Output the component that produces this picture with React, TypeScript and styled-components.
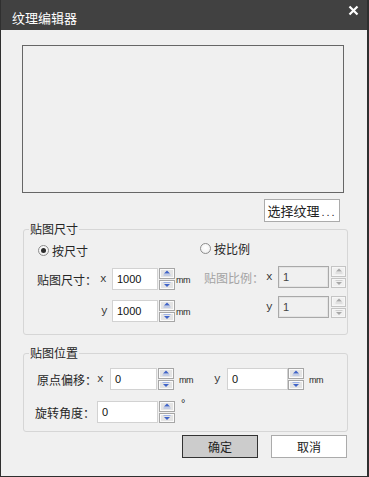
import React from "react";
import styled, { createGlobalStyle } from "styled-components";

const Global = createGlobalStyle`
  html, body { margin: 0; padding: 0; background: #f0f0f0; }
  * { box-sizing: border-box; }
`;

const Dialog = styled.div`
  width: 369px;
  height: 477px;
  background: #f0f0f0;
  border-left: 1px solid #2f2f2f;
  border-right: 2px solid #2f2f2f;
  border-bottom: 1px solid #2f2f2f;
  display: flex;
  flex-direction: column;
  font-family: "Noto Sans CJK SC", "Noto Sans", sans-serif;
  font-size: 12px;
  color: #262626;
`;

const TitleBar = styled.div`
  height: 30px;
  flex: none;
  background: #414141;
  color: #ffffff;
  display: flex;
  align-items: flex-start;
  padding-left: 11px;
`;

const Title = styled.div`
  font-size: 13px;
  line-height: 16px;
  margin-top: 10px;
`;

const Close = styled.div`
  margin-left: auto;
  margin-top: 5px;
  margin-right: 8px;
  width: 11px;
  height: 11px;
  display: flex;
`;

const Preview = styled.div`
  margin: 15px 0 0 21px;
  width: 322px;
  height: 148px;
  border: 1px solid #666666;
`;

const SelectRow = styled.div`
  display: flex;
  justify-content: flex-end;
  margin-top: 6px;
  padding-right: 27px;
`;

const PlainButton = styled.div<{ $primary?: boolean; $size?: number }>`
  width: 76px;
  height: 23px;
  display: flex;
  align-items: center;
  justify-content: center;
  font-size: ${(p) => p.$size ?? 12}px;
  color: #222;
  background: ${(p) => (p.$primary ? "#cccccc" : "#ffffff")};
  border: 1px solid ${(p) => (p.$primary ? "#333333" : "#ababab")};
`;

const Dots = styled.span`
  letter-spacing: 2px;
  font-family: "Liberation Sans", sans-serif;
  font-size: 11px;
  margin-left: 2px;
  margin-top: 3px;
`;

const Group = styled.div<{ $h: number; $mt: number }>`
  position: relative;
  margin: ${(p) => p.$mt}px 0 0 22px;
  width: 325px;
  height: ${(p) => p.$h}px;
  border: 1px solid #d6d6d6;
  border-radius: 3px;
  padding-left: 13px;
`;

const Legend = styled.div`
  position: absolute;
  top: -10px;
  left: 5px;
  padding: 0 1px;
  background: #f0f0f0;
  font-size: 12px;
  line-height: 18px;
  color: #262626;
`;

const Columns = styled.div`
  display: flex;
`;

const Column = styled.div<{ $w?: number; $gap: number }>`
  display: flex;
  flex-direction: column;
  width: ${(p) => (p.$w ? `${p.$w}px` : "auto")};
  gap: ${(p) => p.$gap}px;
`;

const RadioRow = styled.div<{ $mt: number; $ml: number; $mb: number }>`
  display: flex;
  align-items: center;
  height: 16px;
  margin-top: ${(p) => p.$mt}px;
  margin-left: ${(p) => p.$ml}px;
  margin-bottom: ${(p) => p.$mb}px;
  gap: 3px;
`;

const RadioCircle = styled.div<{ $checked?: boolean }>`
  width: 11px;
  height: 11px;
  border-radius: 50%;
  border: 1px solid #8d8d8d;
  background: radial-gradient(circle at 50% 40%, #ffffff 0%, #f4f4f4 60%, #e2e2e2 100%);
  display: flex;
  align-items: center;
  justify-content: center;
  &::after {
    content: "";
    display: ${(p) => (p.$checked ? "block" : "none")};
    width: 5px;
    height: 5px;
    border-radius: 50%;
    background: #2d2d2d;
  }
`;

const FieldRow = styled.div<{ $mt?: number; $ml?: number }>`
  display: flex;
  align-items: center;
  height: 22px;
  margin-top: ${(p) => p.$mt ?? 0}px;
  margin-left: ${(p) => p.$ml ?? 0}px;
`;

const Label = styled.div<{ $w: number; $disabled?: boolean }>`
  width: ${(p) => p.$w}px;
  flex: none;
  font-size: 12px;
  color: ${(p) => (p.$disabled ? "#a3a3a3" : "#262626")};
  white-space: nowrap;
`;

const Axis = styled.div<{ $w: number; $pl?: number }>`
  width: ${(p) => p.$w}px;
  flex: none;
  padding-left: ${(p) => p.$pl ?? 0}px;
  font-family: "Liberation Mono", monospace;
  font-size: 11px;
  color: #333;
  margin-top: -1px;
`;

const Input = styled.div<{ $w: number; $disabled?: boolean }>`
  width: ${(p) => p.$w}px;
  height: 22px;
  flex: none;
  background: ${(p) => (p.$disabled ? "#f0f0f0" : "#ffffff")};
  border: 1px solid ${(p) => (p.$disabled ? "#a9a9a9" : "#d2d2d2")};
  box-shadow: ${(p) => (p.$disabled ? "inset 0 0 0 1px #e4e4e4" : "none")};
  display: flex;
  align-items: center;
  padding-left: 4px;
  font-family: "Liberation Sans", sans-serif;
  font-size: 11px;
  color: ${(p) => (p.$disabled ? "#444" : "#111")};
`;

const Spin = styled.div<{ $ml: number; $w: number }>`
  margin-left: ${(p) => p.$ml}px;
  width: ${(p) => p.$w}px;
  height: 22px;
  flex: none;
  display: flex;
  flex-direction: column;
  gap: 1px;
`;

const SpinHalf = styled.div<{ $disabled?: boolean }>`
  flex: 1;
  border: 1px solid ${(p) => (p.$disabled ? "#c4c4c4" : "#a6a6a6")};
  background: ${(p) => (p.$disabled ? "#f0f0f0" : "#e4e4e4")};
  box-shadow: inset 0 0 0 1px ${(p) => (p.$disabled ? "#f7f7f7" : "#fbfbfb")};
  display: flex;
  align-items: center;
  justify-content: center;
`;

const Unit = styled.div<{ $ml: number; $w?: number; $top?: boolean }>`
  margin-left: ${(p) => p.$ml}px;
  width: ${(p) => (p.$w ? `${p.$w}px` : "auto")};
  flex: none;
  align-self: ${(p) => (p.$top ? "flex-start" : "center")};
  font-family: "Liberation Sans", sans-serif;
  font-size: ${(p) => (p.$top ? 11 : 9)}px;
  letter-spacing: -0.4px;
  color: #2a2a2a;
  margin-top: ${(p) => (p.$top ? -4 : 2)}px;
`;

const ButtonRow = styled.div`
  display: flex;
  justify-content: flex-end;
  gap: 13px;
  margin-top: 3px;
  padding-right: 20px;
`;

const Arrow: React.FC<{ up?: boolean; disabled?: boolean }> = ({ up, disabled }) => {
  const c = disabled ? "#a8a8a8" : "#3f63c8";
  const l = disabled ? "#cfcfcf" : "#9fb3e6";
  return (
    <svg width="8" height="6" viewBox="0 0 8 6">
      {up ? (
        <>
          <path d="M4 0.5 L7 3.5 L1 3.5 Z" fill={c} />
          <rect x="0.5" y="4.5" width="7" height="1" fill={l} />
        </>
      ) : (
        <>
          <rect x="0.5" y="0" width="7" height="1" fill={l} />
          <path d="M1 2 L7 2 L4 5 Z" fill={c} />
        </>
      )}
    </svg>
  );
};

const SpinBox: React.FC<{ ml: number; w: number; disabled?: boolean }> = ({ ml, w, disabled }) => (
  <Spin $ml={ml} $w={w}>
    <SpinHalf $disabled={disabled}>
      <Arrow up disabled={disabled} />
    </SpinHalf>
    <SpinHalf $disabled={disabled}>
      <Arrow disabled={disabled} />
    </SpinHalf>
  </Spin>
);

export default function App() {
  return (
    <>
      <Global />
      <Dialog>
        <TitleBar>
          <Title>纹理编辑器</Title>
          <Close>
            <svg width="11" height="11" viewBox="0 0 11 11">
              <path d="M1.5 1.5 L9.5 9.5 M9.5 1.5 L1.5 9.5" stroke="#ffffff" strokeWidth="2.2" />
            </svg>
          </Close>
        </TitleBar>

        <Preview />

        <SelectRow>
          <PlainButton $size={13}>
            选择纹理<Dots>...</Dots>
          </PlainButton>
        </SelectRow>

        <Group $h={106} $mt={7}>
          <Legend>贴图尺寸</Legend>
          <Columns>
            <Column $w={163} $gap={10}>
              <RadioRow $mt={12} $ml={1} $mb={0}>
                <RadioCircle $checked />
                <span>按尺寸</span>
              </RadioRow>
              <FieldRow>
                <Label $w={60}>贴图尺寸：</Label>
                <Axis $w={15} $pl={3}>x</Axis>
                <Input $w={46}>1000</Input>
                <SpinBox ml={1} w={16} />
                <Unit $ml={1}>mm</Unit>
              </FieldRow>
              <FieldRow>
                <Label $w={60} />
                <Axis $w={15} $pl={4}>y</Axis>
                <Input $w={46}>1000</Input>
                <SpinBox ml={1} w={16} />
                <Unit $ml={1}>mm</Unit>
              </FieldRow>
            </Column>
            <Column $gap={8}>
              <RadioRow $mt={10} $ml={0} $mb={2}>
                <RadioCircle />
                <span>按比例</span>
              </RadioRow>
              <FieldRow $ml={4}>
                <Label $w={62} $disabled>贴图比例：</Label>
                <Axis $w={12}>x</Axis>
                <Input $w={51} $disabled>1</Input>
                <SpinBox ml={2} w={15} disabled />
              </FieldRow>
              <FieldRow $ml={4}>
                <Label $w={62} />
                <Axis $w={12}>y</Axis>
                <Input $w={51} $disabled>1</Input>
                <SpinBox ml={2} w={15} disabled />
              </FieldRow>
            </Column>
          </Columns>
        </Group>

        <Group $h={79} $mt={18}>
          <Legend>贴图位置</Legend>
          <Column $gap={11}>
            <FieldRow $mt={14}>
              <Label $w={60}>原点偏移：</Label>
              <Axis $w={13}>x</Axis>
              <Input $w={47}>0</Input>
              <SpinBox ml={1} w={16} />
              <Unit $ml={5} $w={35}>mm</Unit>
              <Axis $w={13}>y</Axis>
              <Input $w={61}>0</Input>
              <SpinBox ml={0} w={16} />
              <Unit $ml={5}>mm</Unit>
            </FieldRow>
            <FieldRow $ml={-2}>
              <Label $w={62}>旋转角度：</Label>
              <Input $w={61}>0</Input>
              <SpinBox ml={1} w={16} />
              <Unit $ml={6} $top>°</Unit>
            </FieldRow>
          </Column>
        </Group>

        <ButtonRow>
          <PlainButton $primary>确定</PlainButton>
          <PlainButton>取消</PlainButton>
        </ButtonRow>
      </Dialog>
    </>
  );
}
